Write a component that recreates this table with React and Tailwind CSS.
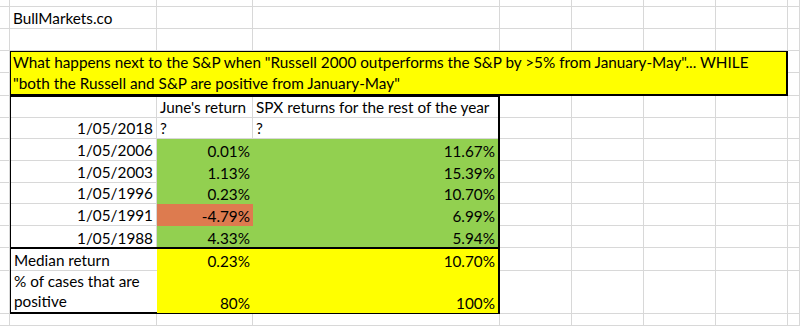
import React from "react";

const line = "border-[#d8d8d8]";
const txt = "flex items-end px-[3px] pb-[2px] leading-[16px] whitespace-nowrap";

const rows = [
  ["1/05/2006", "0.01%", "11.67%", false],
  ["1/05/2003", "1.13%", "15.39%", false],
  ["1/05/1996", "0.23%", "10.70%", false],
  ["1/05/1991", "-4.79%", "6.99%", true],
  ["1/05/1988", "4.33%", "5.94%", false],
];

const Blank = () => <div className={`border-r border-b ${line}`} />;

const DataTable = () => (
  <div className="col-start-2 col-span-3 row-start-6 row-span-7 -ml-px -mt-px border-l-2 border-r-2 border-t-2 border-black grid grid-cols-[146px_96px_1fr] grid-rows-[21px_21px_22px_22px_21px_22px_22px]">
    <div className={`border-r border-b ${line}`} />
    <div className={`${txt} border-r border-b ${line}`}>June's return</div>
    <div className={`${txt} border-b ${line}`}>SPX returns for the rest of the year</div>

    <div className={`${txt} justify-end border-r border-b ${line}`}>1/05/2018</div>
    <div className={`${txt} border-r border-b ${line}`}>?</div>
    <div className={`${txt} border-b ${line}`}>?</div>

    {rows.map(([date, june, rest, bad], i) => (
      <React.Fragment key={date}>
        <div className={`${txt} justify-end border-r ${line} ${i < rows.length - 1 ? "border-b" : ""}`}>
          {date}
        </div>
        <div className={`${txt} justify-end ${bad ? "bg-[#dd7b4f]" : "bg-[#92d050]"}`}>{june}</div>
        <div className={`${txt} justify-end bg-[#92d050]`}>{rest}</div>
      </React.Fragment>
    ))}
  </div>
);

const Summary = () => (
  <div className="col-start-2 col-span-3 row-start-13 row-span-2 -ml-px -mt-px border-2 border-black grid grid-cols-[146px_96px_1fr] grid-rows-[22px_1fr]">
    <div className={`${txt} border-b ${line}`}>Median return</div>
    <div className={`${txt} justify-end bg-[#ffff00]`}>0.23%</div>
    <div className={`${txt} justify-end bg-[#ffff00]`}>10.70%</div>

    <div className="flex items-end px-[3px] pb-[2px] leading-[20px]">
      <span>
        % of cases that are
        <br />
        positive
      </span>
    </div>
    <div className={`${txt} justify-end bg-[#ffff00]`}>80%</div>
    <div className={`${txt} justify-end bg-[#ffff00]`}>100%</div>
  </div>
);

export default function App() {
  return (
    <div className="w-[800px] h-[326px] overflow-hidden bg-white text-[15.3px] text-black font-['Lato',sans-serif] grid grid-cols-[10px_147px_96px_247px_72px_72px_72px_72px_12px] grid-rows-[7px_22px_22px_22px_23px_22px_21px_22px_22px_21px_22px_22px_23px_43px_12px]">
      <div className={`col-start-2 row-start-2 ${txt} border-r border-b ${line}`}>BullMarkets.co</div>

      <div className="col-start-2 col-span-7 row-start-4 row-span-2 -ml-px -mt-px border-2 border-black bg-[#ffff00] flex items-end px-[2px] leading-[21px] whitespace-nowrap">
        <span>
          What happens next to the S&amp;P when "Russell 2000 outperforms the S&amp;P by &gt;5% from January-May"... WHILE
          <br />
          "both the Russell and S&amp;P are positive from January-May"
        </span>
      </div>

      <DataTable />
      <Summary />

      {Array.from({ length: 93 }).map((_, i) => (
        <Blank key={i} />
      ))}
    </div>
  );
}
